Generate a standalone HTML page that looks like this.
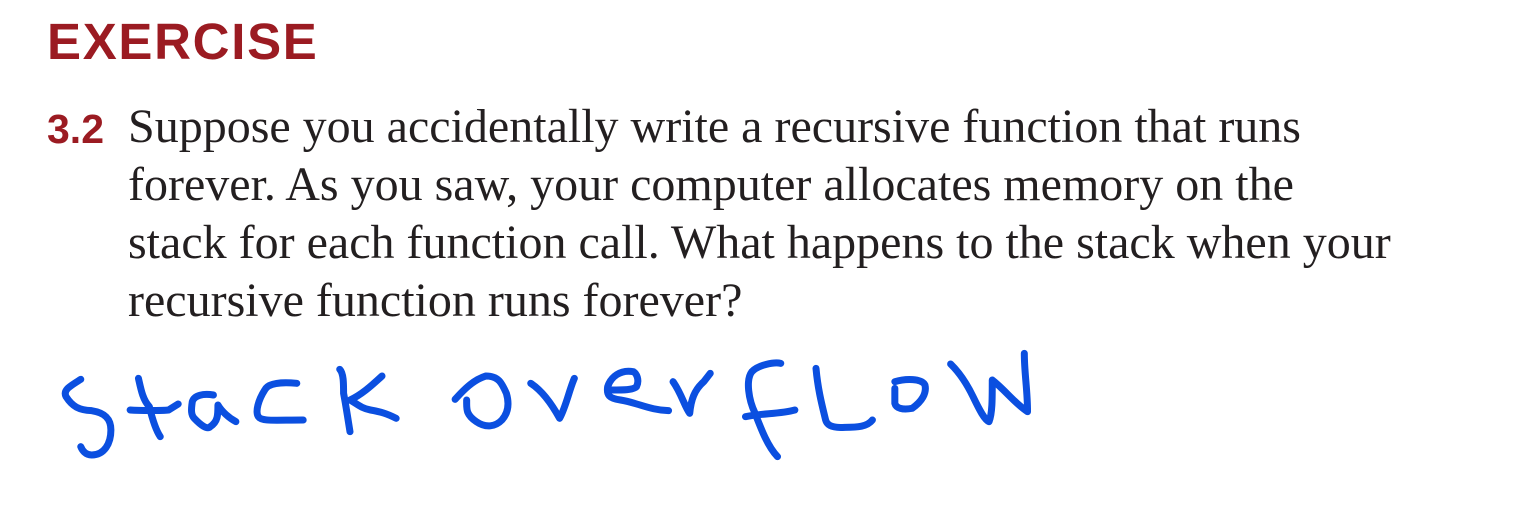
<!DOCTYPE html>
<html><head><meta charset="utf-8"><style>
html,body{margin:0;padding:0;background:#fff;width:1527px;height:524px;overflow:hidden;position:relative}
.h{position:absolute;left:47px;top:12px;font:bold 51px "Liberation Sans",sans-serif;color:#9b1b22;letter-spacing:1.7px}
.n{position:absolute;left:47px;top:106px;font:bold 41px "Liberation Sans",sans-serif;color:#9b1b22}
.t{position:absolute;left:128px;top:98px;font:48px "Liberation Serif",serif;color:#231f20;line-height:58px;white-space:nowrap}
svg{position:absolute;left:0;top:0}
</style></head><body>
<div class="h">EXERCISE</div>
<div class="n">3.2</div>
<div class="t">Suppose you accidentally write a recursive function that runs<br>forever. As you saw, your computer allocates memory on the<br>stack for each function call. What happens to the stack when your<br>recursive function runs forever?</div>
<svg width="1527" height="524"><g transform="translate(50,340) scale(0.641,0.3333)" fill="none" stroke="#0b4fe0" stroke-width="7" stroke-linecap="round" stroke-linejoin="round">
<path vector-effect="non-scaling-stroke" d="M48,118 C30,140 20,150 25,170 C35,200 45,210 65,212 C85,218 95,235 95,270 C95,310 85,345 65,345 C55,345 50,330 48,320"/>
<path vector-effect="non-scaling-stroke" d="M138,115 C142,150 145,180 155,200 C160,240 165,270 172,290 M125,210 C140,212 175,212 185,210 L200,192"/>
<path vector-effect="non-scaling-stroke" d="M255,165 C240,160 225,165 222,185 C220,210 220,225 225,235 C235,255 245,270 250,260 C262,245 262,225 262,195 C268,215 280,235 290,245"/>
<path vector-effect="non-scaling-stroke" d="M385,130 C360,125 340,130 335,150 C325,180 320,215 325,230 C330,245 350,240 395,240"/>
<path vector-effect="non-scaling-stroke" d="M452,88 C458,100 458,130 458,160 C462,200 465,240 468,275 M518,108 C500,140 485,165 468,180 C478,190 485,205 500,210 C515,215 525,220 540,235"/>
<path vector-effect="non-scaling-stroke" d="M632,178 C645,150 660,120 680,108 C700,108 705,130 712,160 C718,200 712,225 705,240 C695,260 680,265 665,245 C650,225 650,210 650,190 L650,180"/>
<path vector-effect="non-scaling-stroke" d="M750,130 C770,155 785,200 795,235 C805,200 810,150 818,115"/>
<path vector-effect="non-scaling-stroke" d="M875,150 C895,150 910,150 915,140 C920,120 915,100 910,95 C890,88 875,110 870,140 C868,165 872,175 890,180 C920,190 935,210 965,212"/>
<path vector-effect="non-scaling-stroke" d="M972,125 C985,160 990,200 998,220 C1000,180 1005,150 1020,125 L1030,100"/>
<path vector-effect="non-scaling-stroke" d="M1140,70 C1130,65 1105,75 1095,95 C1085,120 1090,180 1100,220 C1110,270 1120,320 1135,350 M1085,230 C1110,220 1140,222 1162,210"/>
<path vector-effect="non-scaling-stroke" d="M1195,85 C1198,150 1205,200 1210,240 C1212,255 1220,265 1240,262 C1260,262 1275,260 1283,240"/>
<path vector-effect="non-scaling-stroke" d="M1318,125 C1335,115 1360,115 1365,135 C1368,160 1360,185 1345,205 C1330,210 1320,205 1318,190 L1318,145"/>
<path vector-effect="non-scaling-stroke" d="M1405,72 C1420,100 1430,130 1440,170 C1450,210 1458,240 1465,245 C1470,220 1470,180 1470,120 C1490,150 1505,190 1525,215 C1525,150 1520,100 1520,40"/>
</g></svg>
</body></html>
